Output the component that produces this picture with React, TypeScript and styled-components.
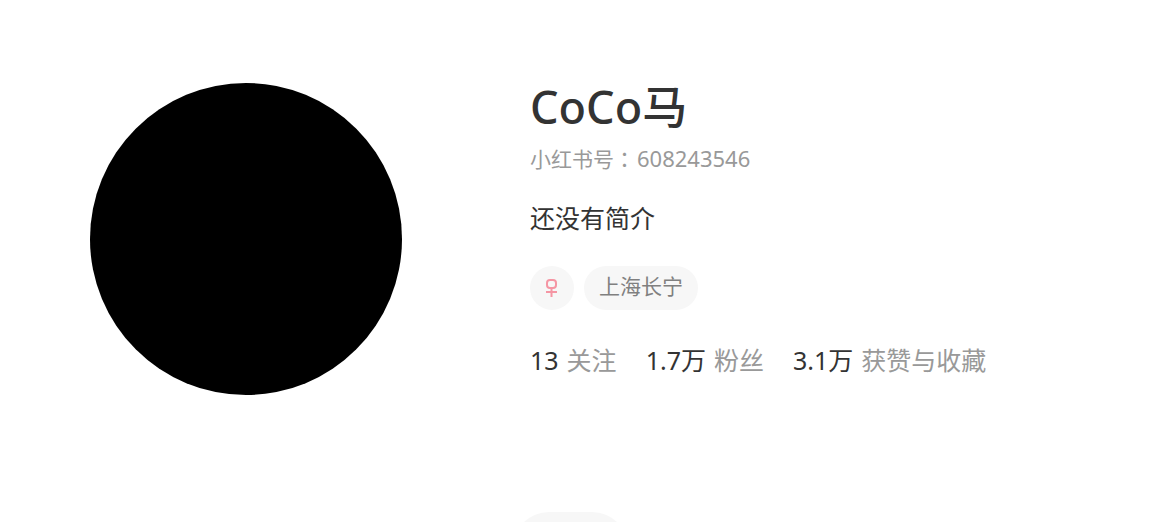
import React from "react";
import styled, { createGlobalStyle } from "styled-components";

const GlobalStyle = createGlobalStyle`
  * {
    box-sizing: border-box;
  }

  html {
    overflow: hidden;
  }

  body {
    margin: 0;
    background: #fff;
    color: #333;
    font-family: "Noto Sans", "Noto Sans CJK SC", sans-serif;
  }
`;

const Page = styled.main`
  display: flex;
  flex-direction: column;
  gap: 117px;
  padding-top: 83px;
`;

const Profile = styled.section`
  display: flex;
  align-items: flex-start;
  gap: 128px;
  padding: 0 90px;
`;

const Avatar = styled.div`
  flex: none;
  width: 312px;
  height: 312px;
  border-radius: 50%;
  background: #000;
`;

const Info = styled.div`
  display: flex;
  flex-direction: column;
  align-items: flex-start;
  min-width: 0;
  white-space: nowrap;
`;

const Name = styled.h1`
  margin: 0;
  font-size: 45px;
  line-height: 48px;
  font-weight: 500;
`;

const AccountId = styled.div`
  margin-top: 13px;
  font-size: 21px;
  line-height: 28px;
  color: #999;
`;

const Colon = styled.span`
  margin-right: 2px;
  font-family: "Noto Sans CJK TC", sans-serif;
`;

const AccountNumber = styled.span`
  font-size: 22px;
`;

const Bio = styled.p`
  margin: 27px 0 0;
  font-size: 25px;
  line-height: 36px;
`;

const Tags = styled.div`
  display: flex;
  gap: 10px;
  margin-top: 30px;
`;

const Tag = styled.span`
  display: flex;
  align-items: center;
  justify-content: center;
  height: 44px;
  min-width: 44px;
  padding: 0 15px;
  border-radius: 22px;
  background: #f7f7f7;
`;

const TagText = styled.span`
  padding-bottom: 4px;
  color: #808080;
  font-size: 21px;
  line-height: 28px;
`;

const Stats = styled.div`
  display: flex;
  gap: 29px;
  margin-top: 32px;
  font-size: 25px;
  line-height: 36px;
`;

const Stat = styled.div`
  display: flex;
  gap: 8px;
`;

const StatLabel = styled.span`
  color: #999;
`;

const Tabs = styled.nav`
  display: flex;
  justify-content: center;
  padding-right: 34px;
`;

const Tab = styled.button`
  width: 115px;
  height: 72px;
  border: 0;
  border-radius: 36px;
  background: #f7f7f7;
`;

const stats = [
  { value: "13", label: "关注" },
  { value: "1.7万", label: "粉丝" },
  { value: "3.1万", label: "获赞与收藏" },
];

function FemaleIcon() {
  return (
    <svg
      width="14"
      height="20"
      viewBox="0 0 14 20"
      fill="none"
      stroke="#f596a4"
      strokeWidth="2"
      role="img"
      aria-label="女"
    >
      <rect x="2" y="2" width="9" height="8" rx="3" />
      <path d="M6.5 10V19M1 14H12" />
    </svg>
  );
}

export default function App() {
  return (
    <>
      <GlobalStyle />
      <Page lang="zh-CN">
        <Profile>
          <Avatar />
          <Info>
            <Name>CoCo马</Name>
            <AccountId>
              小红书号<Colon lang="zh-TW">：</Colon>
              <AccountNumber>608243546</AccountNumber>
            </AccountId>
            <Bio>还没有简介</Bio>
            <Tags>
              <Tag>
                <FemaleIcon />
              </Tag>
              <Tag>
                <TagText>上海长宁</TagText>
              </Tag>
            </Tags>
            <Stats>
              {stats.map(({ value, label }) => (
                <Stat key={label}>
                  <span>{value}</span>
                  <StatLabel>{label}</StatLabel>
                </Stat>
              ))}
            </Stats>
          </Info>
        </Profile>
        <Tabs>
          <Tab type="button" aria-label="笔记" />
        </Tabs>
      </Page>
    </>
  );
}
